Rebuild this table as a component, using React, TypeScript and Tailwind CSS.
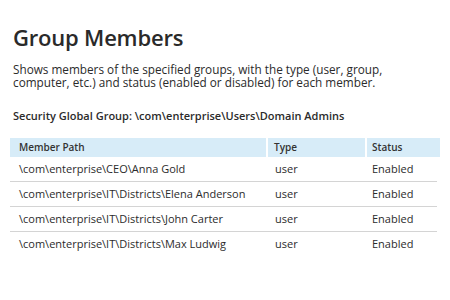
import React from "react";

const rows = [
  ["\\com\\enterprise\\CEO\\Anna Gold", "user", "Enabled"],
  ["\\com\\enterprise\\IT\\Districts\\Elena Anderson", "user", "Enabled"],
  ["\\com\\enterprise\\IT\\Districts\\John Carter", "user", "Enabled"],
  ["\\com\\enterprise\\IT\\Districts\\Max Ludwig", "user", "Enabled"],
];

export default function App() {
  return (
    <div className="w-[450px] h-[300px] bg-white text-[#2b2b2b] overflow-hidden" style={{ fontFamily: '"Open Sans", sans-serif' }}>
      <div className="pl-[13px] pr-[10px] pt-[22px]">
        <h1 className="text-[22px] leading-[30px] font-semibold text-[#2a2a2a] tracking-[-0.2px]">Group Members</h1>
        <p className="mt-[11px] text-[11.75px] leading-[13px] text-[#2b2b2b] w-[400px]">
          Shows members of the specified groups, with the type (user, group, computer, etc.) and status (enabled or disabled) for each member.
        </p>
        <div className="mt-[20px] text-[11px] leading-[14px] font-semibold text-[#2b2b2b]">
          Security Global Group: \com\enterprise\Users\Domain Admins
        </div>
      </div>
      <div className="ml-[10px] mt-[15px] w-[430px]">
        <div className="flex h-[19px] bg-[#d7ecf8] text-[10px] font-semibold text-[#333] items-center">
          <div className="w-[258px] pl-[9px] h-full flex items-center border-r-2 border-white">Member Path</div>
          <div className="w-[99px] pl-[6px] h-full flex items-center border-r-2 border-white">Type</div>
          <div className="flex-1 pl-[5px] h-full flex items-center">Status</div>
        </div>
        {rows.map((r, i) => (
          <div key={i} className={`flex h-[25px] w-[427px] items-center text-[11px] text-[#2b2b2b] ${i < rows.length - 1 ? "border-b border-[#d4d4d4]" : ""}`}>
            <div className="w-[258px] pl-[9px]">{r[0]}</div>
            <div className="w-[99px] pl-[7px]">{r[1]}</div>
            <div className="flex-1 pl-[5px]">{r[2]}</div>
          </div>
        ))}
      </div>
    </div>
  );
}
